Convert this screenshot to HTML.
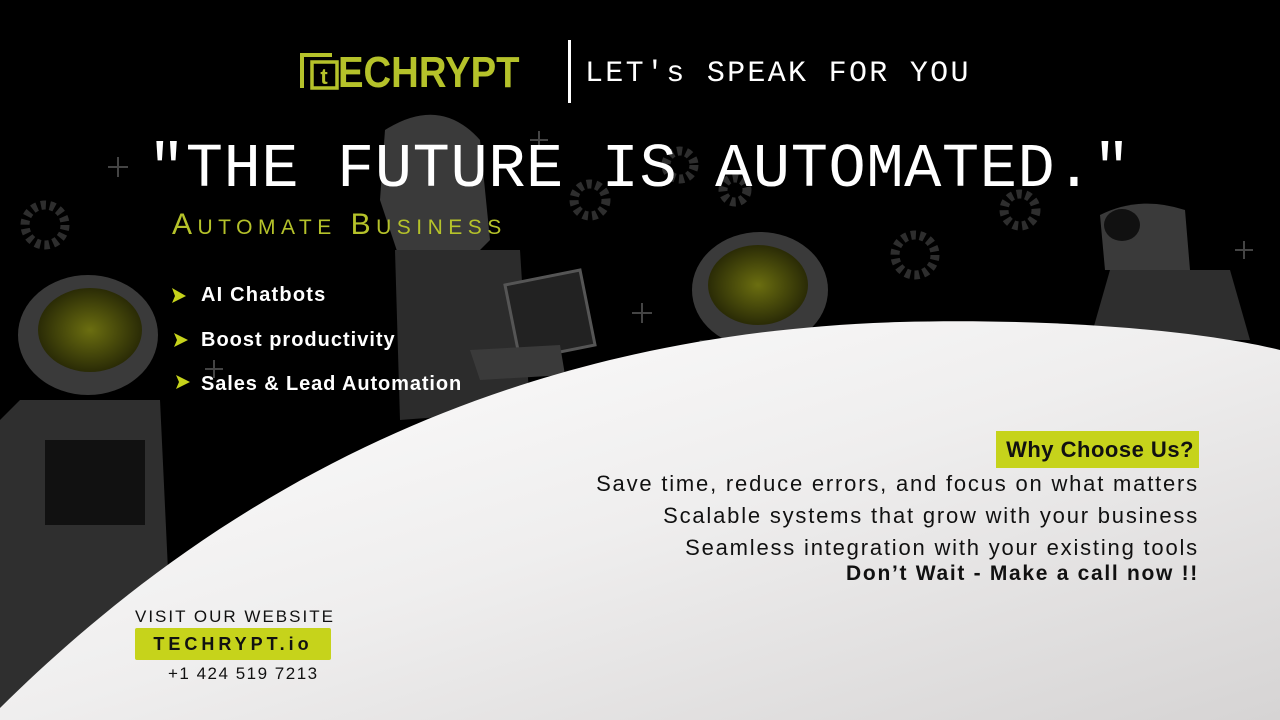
<!DOCTYPE html>
<html><head><meta charset="utf-8"><style>
html,body{margin:0;padding:0}
body{width:1280px;height:720px;position:relative;overflow:hidden;background:#000;font-family:"Liberation Sans",sans-serif}
.a{position:absolute}
.dot{font-family:"Liberation Mono",monospace;color:#fff;white-space:nowrap}
</style></head><body>
<svg class="a" style="left:0;top:0" width="1280" height="720">
<defs>
<linearGradient id="g" x1="0" y1="0" x2="1" y2="1"><stop offset="0" stop-color="#ffffff"/><stop offset="0.5" stop-color="#efeeee"/><stop offset="1" stop-color="#d6d4d4"/></linearGradient>
<radialGradient id="v" cx="0.5" cy="0.5" r="0.5"><stop offset="0" stop-color="#6b6e10"/><stop offset="1" stop-color="#2a2b06"/></radialGradient>
</defs>
<ellipse cx="88" cy="335" rx="70" ry="60" fill="#3a3a3a"/>
<ellipse cx="90" cy="330" rx="52" ry="42" fill="url(#v)"/>
<path d="M20,400 L160,400 L175,720 L0,720 L0,420 Z" fill="#2f2f2f"/>
<rect x="45" y="440" width="100" height="85" fill="#111"/>
<path d="M385,130 Q440,95 480,140 L490,240 L470,260 L400,260 L380,200 Z" fill="#3a3a3a"/>
<path d="M395,250 L520,250 L530,410 L400,420 Z" fill="#2c2c2c"/>
<path d="M505,285 L580,270 L595,345 L520,360 Z" fill="#222" stroke="#555" stroke-width="3"/>
<path d="M470,350 L560,345 L565,375 L480,380 Z" fill="#3a3a3a"/>
<ellipse cx="760" cy="290" rx="68" ry="58" fill="#3a3a3a"/>
<ellipse cx="758" cy="285" rx="50" ry="40" fill="url(#v)"/>
<path d="M700,340 L820,340 L830,360 L690,360 Z" fill="#2f2f2f"/>
<path d="M1100,215 Q1140,195 1185,210 L1190,270 L1105,270 Z" fill="#3a3a3a"/>
<ellipse cx="1122" cy="225" rx="18" ry="16" fill="#111"/>
<path d="M1110,270 L1230,270 L1250,340 L1090,340 Z" fill="#2e2e2e"/>
<g fill="none" stroke="#2e2e2e" stroke-width="9" stroke-dasharray="5 4">
<circle cx="45" cy="225" r="20"/><circle cx="590" cy="200" r="16"/><circle cx="680" cy="165" r="14"/><circle cx="915" cy="255" r="20"/><circle cx="1020" cy="210" r="16"/><circle cx="735" cy="190" r="12"/></g>
<g stroke="#444" stroke-width="2"><path d="M108,167h20M118,157v20M530,140h18M539,131v18M632,313h20M642,303v20M1235,250h18M1244,241v18M205,369h18M214,360v18"/></g>
<path d="M0,720 L0,708 C170,540 450,335 900,322 C1050,318 1200,330 1280,350 L1280,720 Z" fill="url(#g)"/>
<rect x="568" y="40" width="3" height="63" fill="#fff"/>
<path d="M302,88 V55 H332" fill="none" stroke="#b5c22a" stroke-width="4"/>
<rect x="312" y="62" width="25" height="26" fill="none" stroke="#b5c22a" stroke-width="3.5"/>
<text x="324" y="84" font-family="Liberation Sans" font-weight="bold" font-size="22" fill="#b5c22a" text-anchor="middle">t</text>
<g fill="#c6d31b"><path d="M172,288 L186,296 L172,303 L175,296Z"/><path d="M174,333 L188,340 L174,347 L177,340Z"/><path d="M176,375 L190,382 L176,389 L179,382Z"/></g>
</svg>
<div class="a" style="left:338px;top:48px;font-size:44px;font-weight:bold;color:#b5c22a;transform:scaleX(0.87);transform-origin:left;white-space:nowrap">ECHRYPT</div>
<div class="a dot" style="left:585px;top:57px;font-size:30px;letter-spacing:2.3px">LET's SPEAK FOR YOU</div>
<div class="a dot" style="left:148px;top:134px;font-size:62px;letter-spacing:0.6px">"THE FUTURE IS AUTOMATED."</div>
<div class="a" style="left:172px;top:208px;font-size:30px;color:#b5c22a;font-variant:small-caps;letter-spacing:5.5px;white-space:nowrap">Automate Business</div>
<div class="a" style="left:201px;top:284px;font-size:20px;color:#fff;font-weight:bold;letter-spacing:1.2px">AI Chatbots</div>
<div class="a" style="left:201px;top:329px;font-size:20px;color:#fff;font-weight:bold;letter-spacing:1px">Boost productivity</div>
<div class="a" style="left:201px;top:373px;font-size:20px;color:#fff;font-weight:bold;letter-spacing:0.9px">Sales &amp; Lead Automation</div>
<div class="a" style="left:996px;top:431px;width:203px;height:37px;background:#c6d31b"></div>
<div class="a" style="right:86px;top:437px;font-size:22px;font-weight:bold;color:#111;letter-spacing:0.5px">Why Choose Us?</div>
<div class="a" style="right:81px;top:468px;font-size:22px;color:#111;text-align:right;line-height:32px;white-space:nowrap;letter-spacing:1.8px">Save time, reduce errors, and focus on what matters<br>Scalable systems that grow with your business<br>Seamless integration with your existing tools</div>
<div class="a" style="right:81px;top:562px;font-size:21px;font-weight:bold;color:#111;white-space:nowrap;letter-spacing:1.7px">Don’t Wait - Make a call now !!</div>
<div class="a" style="left:135px;top:607px;font-size:17px;letter-spacing:2px;color:#111">VISIT OUR WEBSITE</div>
<div class="a" style="left:135px;top:628px;width:196px;height:32px;background:#c6d31b;border-radius:2px;text-align:center;line-height:32px;font-size:18px;font-weight:bold;letter-spacing:4px;color:#111">TECHRYPT.io</div>
<div class="a" style="left:168px;top:664px;font-size:17px;letter-spacing:1.5px;color:#111">+1 424 519 7213</div>
</body></html>
